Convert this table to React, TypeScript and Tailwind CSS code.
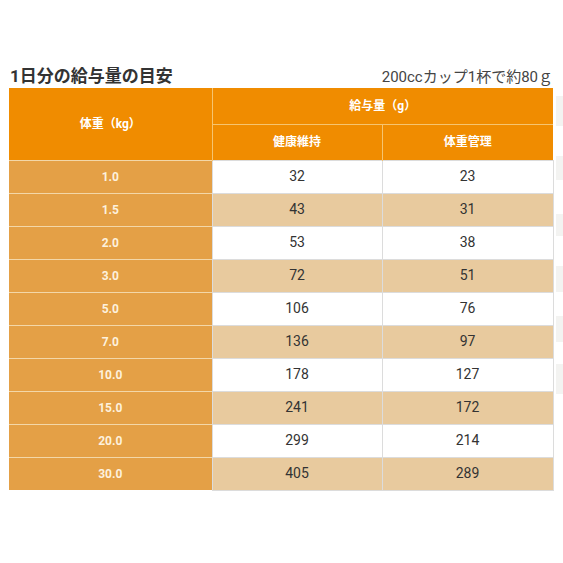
const rows = [
  ["1.0", "32", "23"],
  ["1.5", "43", "31"],
  ["2.0", "53", "38"],
  ["3.0", "72", "51"],
  ["5.0", "106", "76"],
  ["7.0", "136", "97"],
  ["10.0", "178", "127"],
  ["15.0", "241", "172"],
  ["20.0", "299", "214"],
  ["30.0", "405", "289"],
];

// faint ghost blocks along the right edge
const ghosts = [
  { h: "h-[30px]", mt: "mt-[8px]" },
  { h: "h-[24px]", mt: "mt-[30px]" },
  { h: "h-[22px]", mt: "mt-[34px]" },
  { h: "h-[26px]", mt: "mt-[30px]" },
  { h: "h-[26px]", mt: "mt-[24px]" },
  { h: "h-[30px]", mt: "mt-[22px]" },
];

export default function App() {
  return (
    <div
      className="w-[563px] h-[563px] bg-white overflow-hidden pt-[64px]"
      style={{ fontFamily: 'Roboto, "Noto Sans CJK JP", sans-serif' }}
    >
      <div className="flex">
        <div className="ml-[9px] w-[544px]">
          {/* Title row */}
          <div className="flex items-end justify-between h-[24px]">
            <h2 className="text-[17px] font-bold text-[#333] leading-[24px] pl-[1px]">1日分の給与量の目安</h2>
            <span className="text-[15px] text-[#444] leading-[22px]">200ccカップ1杯で約80ｇ</span>
          </div>

          {/* Feeding table */}
          <table className="w-full border-collapse table-fixed">
            <colgroup>
              <col className="w-[203px]" />
              <col className="w-[170px]" />
              <col className="w-[171px]" />
            </colgroup>
            <thead>
              <tr className="h-[36px]">
                <th
                  rowSpan={2}
                  className="bg-[#f08c00] text-white text-[12px] font-bold border-r border-[#f6c46f]"
                >
                  体重（kg）
                </th>
                <th colSpan={2} className="bg-[#f08c00] text-white text-[12px] font-bold border-b border-[#f6c46f]">
                  給与量（g）
                </th>
              </tr>
              <tr className="h-[36px]">
                <th className="bg-[#f08c00] text-white text-[12px] font-bold border-r border-[#f6c46f]">健康維持</th>
                <th className="bg-[#f08c00] text-white text-[12px] font-bold">体重管理</th>
              </tr>
            </thead>
            <tbody>
              {rows.map(([kg, a, b], i) => (
                <tr key={kg} className="h-[33px]">
                  <td className="bg-[#e4a046] text-[#fdf1dd] text-[12px] font-bold text-center border-t border-[#f3d7a8]">
                    {kg}
                  </td>
                  <td
                    className={`${i % 2 === 1 ? "bg-[#e8ca9e]" : "bg-white"} text-[#333] text-[14px] text-center border border-[#dcdcdc]`}
                  >
                    {a}
                  </td>
                  <td
                    className={`${i % 2 === 1 ? "bg-[#e8ca9e]" : "bg-white"} text-[#333] text-[14px] text-center border border-[#dcdcdc]`}
                  >
                    {b}
                  </td>
                </tr>
              ))}
            </tbody>
          </table>
        </div>

        <div className="ml-[3px] w-[7px] flex flex-col pt-[24px]">
          {ghosts.map((g, i) => (
            <div key={i} className={`${g.h} ${g.mt} bg-[#f3f3f1]`} />
          ))}
        </div>
      </div>
    </div>
  );
}
